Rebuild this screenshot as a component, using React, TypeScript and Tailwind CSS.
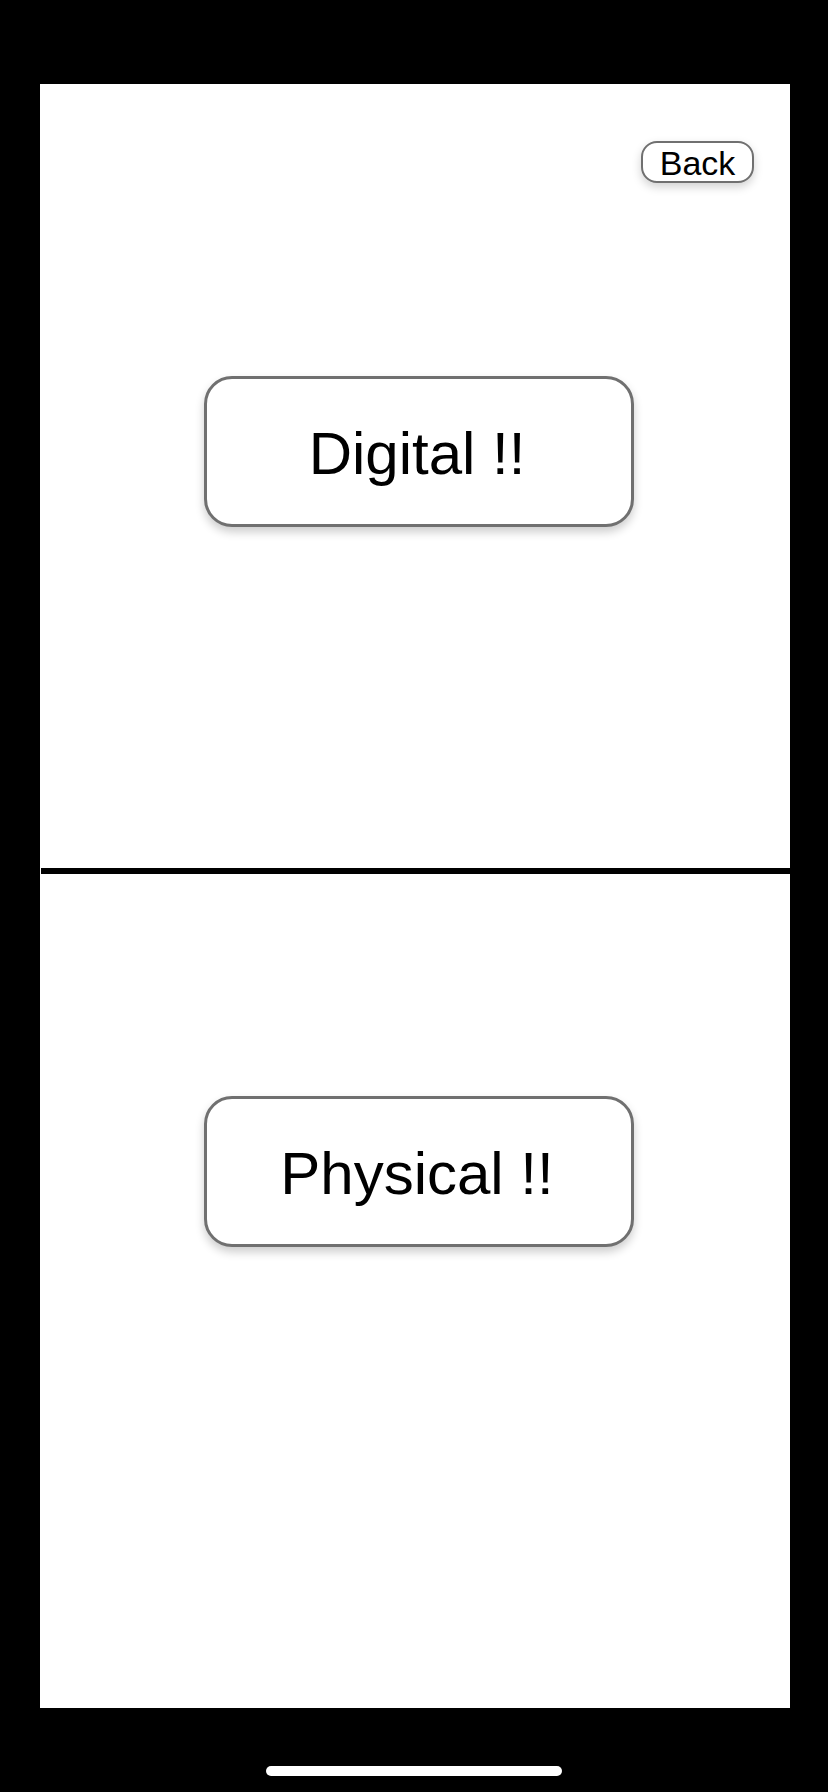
import React from "react";

export default function App() {
  return (
    <div
      className="w-[828px] h-[1792px] bg-black flex flex-col relative"
      style={{ fontFamily: '"Liberation Sans", Arial, sans-serif' }}
    >
      <div className="ml-[40px] mt-[84px] w-[750px] h-[1624px] bg-white flex flex-col">
        <div className="h-[784px] flex flex-col">
          <div className="flex justify-end pt-[57px] pr-[36px]">
            <button className="w-[113px] h-[42px] rounded-[16px] border-2 border-[#707070] bg-white text-black text-[34px] leading-none flex items-center justify-center pt-[2px] shadow-[0_4px_10px_rgba(0,0,0,0.18)]">
              Back
            </button>
          </div>
          <div className="flex justify-center pt-[193px] pl-[8px]">
            <button className="w-[430px] h-[151px] rounded-[28px] border-[3px] border-[#707070] bg-white text-black text-[60px] leading-none flex items-center justify-center pt-[4px] pr-[4px] shadow-[0_5px_10px_rgba(0,0,0,0.2)]">
              Digital !!
            </button>
          </div>
        </div>
        <div className="h-[6px] bg-black ml-[1px]" />
        <div className="flex-1 flex justify-center pt-[222px] pl-[8px]">
          <button className="w-[430px] h-[151px] rounded-[28px] border-[3px] border-[#707070] bg-white text-black text-[60px] leading-none flex items-center justify-center pt-[4px] pr-[4px] shadow-[0_5px_10px_rgba(0,0,0,0.2)]">
            Physical !!
          </button>
        </div>
      </div>
      <div className="flex justify-center pt-[58px]">
        <div className="w-[296px] h-[10px] rounded-full bg-white" />
      </div>
    </div>
  );
}
